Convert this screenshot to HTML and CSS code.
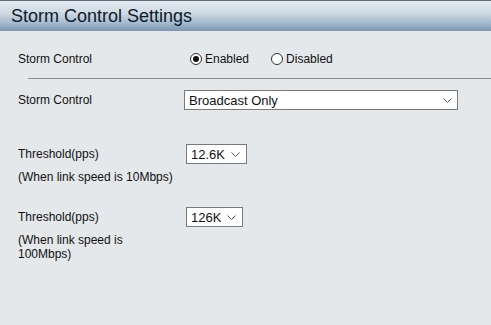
FILE: index.html
```html
<!DOCTYPE html>
<html lang="en">
<head>
  <meta charset="UTF-8">
  <link rel="stylesheet" href="styles.css">
</head>
<body>

  <div class="page-header">
    <div class="title">Storm Control Settings</div>
  </div>

  <div class="content">
    <div class="row row-state">
      <div class="label">Storm Control</div>
      <div class="control">
        <label class="radio"><input type="radio" name="state" value="1" checked>Enabled</label>
        <label class="radio"><input type="radio" name="state" value="0">Disabled</label>
      </div>
    </div>

    <div class="divider"></div>

    <div class="row row-mode">
      <div class="label">Storm Control</div>
      <div class="control">
        <span class="select-wrap wide">
          <select>
            <option>Broadcast Only</option>
            <option>Multicast Only</option>
            <option>Broadcast &amp; Multicast</option>
          </select>
          <svg class="chevron" width="9" height="5" viewBox="0 0 9 5"><path d="M0.5 0.5 L4.5 4.5 L8.5 0.5" fill="none" stroke="#555" stroke-width="1"/></svg>
        </span>
      </div>
    </div>

    <div class="row row-th1">
      <div class="label">Threshold(pps)</div>
      <div class="control">
        <span class="select-wrap th-a">
          <select>
            <option>12.6K</option>
            <option>6.3K</option>
            <option>3.1K</option>
          </select>
          <svg class="chevron" width="9" height="5" viewBox="0 0 9 5"><path d="M0.5 0.5 L4.5 4.5 L8.5 0.5" fill="none" stroke="#555" stroke-width="1"/></svg>
        </span>
      </div>
    </div>
    <div class="note note-1">(When link speed is 10Mbps)</div>

    <div class="row row-th2">
      <div class="label">Threshold(pps)</div>
      <div class="control">
        <span class="select-wrap th-b">
          <select>
            <option>126K</option>
            <option>63K</option>
            <option>31K</option>
          </select>
          <svg class="chevron" width="9" height="5" viewBox="0 0 9 5"><path d="M0.5 0.5 L4.5 4.5 L8.5 0.5" fill="none" stroke="#555" stroke-width="1"/></svg>
        </span>
      </div>
    </div>
    <div class="note note-2">(When link speed is 100Mbps)</div>
  </div>

</body>
</html>
```

FILE: styles.css
```css
html, body {
  margin: 0;
  padding: 0;
  height: 100%;
  background-color: #e4e8eb;
  font-family: "Liberation Sans", Arial, sans-serif;
  color: #111;
  overflow: hidden;
}

.page-header {
  height: 30px;
  border-top: 1px solid #5d6f80;
  background: linear-gradient(to bottom, #e4eaf0 0%, #cfdae4 40%, #a3b8cb 75%, #7896b2 100%);
  display: flex;
  align-items: center;
  padding-left: 11px;
}

.title {
  font-size: 18px;
  color: #0d1a2c;
  padding-top: 1px;
}

.content {
  padding-left: 18px;
  font-size: 12px;
}

.row {
  display: flex;
  align-items: center;
}

.label {
  width: 166px;
  flex-shrink: 0;
}

.control {
  display: flex;
  align-items: center;
}

.row-state {
  margin-top: 16px;
  height: 24px;
}

.radio {
  display: flex;
  align-items: center;
  margin-right: 22px;
  margin-left: 6px;
}

.radio + .radio {
  margin-left: 0;
}

.radio input {
  -webkit-appearance: none;
  appearance: none;
  width: 12px;
  height: 12px;
  margin: 0 3px 0 0;
  border: 1px solid #2e2e2e;
  border-radius: 50%;
  background-color: #fff;
  display: flex;
  align-items: center;
  justify-content: center;
}

.radio input:checked::after {
  content: "";
  width: 6px;
  height: 6px;
  border-radius: 50%;
  background-color: #111;
}

.divider {
  margin: 7px 0 0 10px;
  border-top: 1px solid #8a8d90;
}

.select-wrap {
  position: relative;
  display: inline-block;
}

.select-wrap select {
  -webkit-appearance: none;
  appearance: none;
  height: 20px;
  border: 1px solid #7a7a7a;
  border-radius: 0;
  background-color: #fff;
  font-family: "Liberation Sans", Arial, sans-serif;
  font-size: 13px;
  color: #111;
  padding: 0 0 0 4px;
  margin: 0;
  outline: none;
}

.select-wrap .chevron {
  position: absolute;
  top: 8px;
  pointer-events: none;
}

.wide select { width: 274px; }
.wide .chevron { right: 6px; }

.th-a select { width: 61px; }
.th-a .chevron { right: 7px; }

.th-b select { width: 57px; }
.th-b .chevron { right: 7px; }

.row-mode {
  margin-top: 11px;
}

.row-th1 {
  margin-top: 34px;
}

.row-th1 .control,
.row-th2 .control {
  margin-left: 2px;
}

.note {
  width: 158px;
  line-height: 14px;
}

.note-1 {
  margin-top: 6px;
}

.row-th2 {
  margin-top: 23px;
}

.note-2 {
  margin-top: 6px;
}
```
